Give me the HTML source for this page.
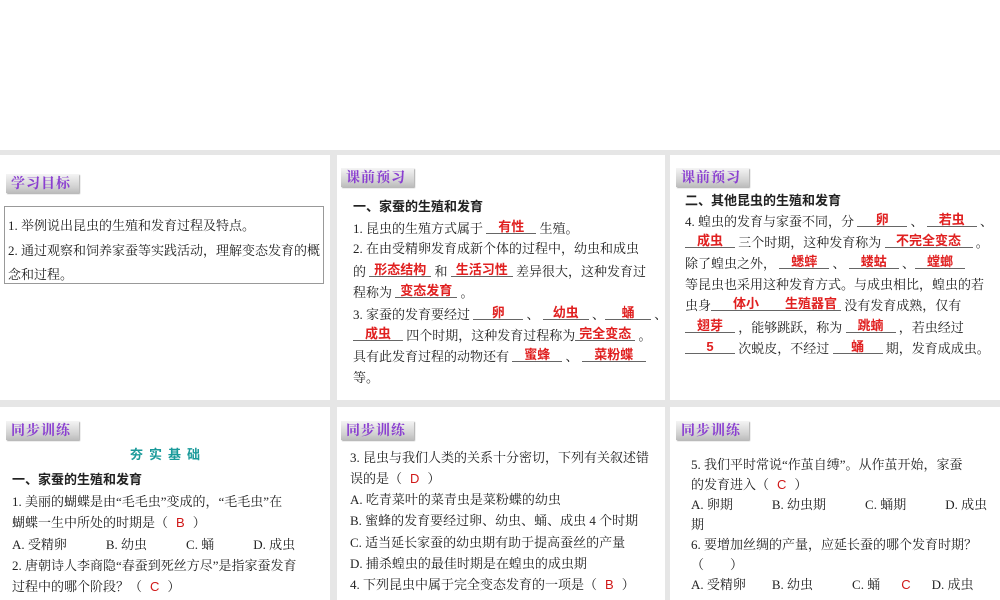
<!DOCTYPE html>
<html><head><meta charset="utf-8">
<style>
*{margin:0;padding:0;box-sizing:border-box}
body{width:1000px;height:600px;position:relative;background:#fff;overflow:hidden;font-family:"Liberation Serif","Noto Serif CJK SC",serif;font-size:13px;color:#222}
.bg{position:absolute;left:0;top:150px;width:1000px;height:450px;background:#e6e6e6}
.p{position:absolute;background:#fff}
.tag{position:absolute;height:19px;width:73px;background:linear-gradient(#f4f4f4,#d0d0d0 70%,#bcbcbc);color:#8a3fd0;font-family:"Noto Serif CJK SC",serif;font-weight:bold;font-size:14px;line-height:19px;padding-left:5px;letter-spacing:1px;box-shadow:1px 1px 1px #aaa}
.l{position:absolute;white-space:nowrap;line-height:16px}
.b{font-family:"Liberation Sans","Noto Sans CJK SC",sans-serif;font-weight:bold}
.u{display:inline-block;border-bottom:1px solid #666;text-align:center;color:#e02020;font-family:"Liberation Sans","Noto Sans CJK SC",sans-serif;font-weight:bold;line-height:13px;vertical-align:2px}
.r{color:#d01818;font-family:"Liberation Sans",sans-serif;padding:0 8px}
</style></head><body>
<div class="bg"></div>
<div class="p" style="left:0;top:155px;width:330px;height:245px"></div>
<div class="p" style="left:337px;top:155px;width:328px;height:245px"></div>
<div class="p" style="left:670px;top:155px;width:330px;height:245px"></div>
<div class="p" style="left:0;top:407px;width:330px;height:193px"></div>
<div class="p" style="left:337px;top:407px;width:328px;height:193px"></div>
<div class="p" style="left:670px;top:407px;width:330px;height:193px"></div>

<div class="tag" style="left:6px;top:174px">学习目标</div>
<div style="position:absolute;left:4px;top:206px;width:320px;height:78px;border:1px solid #999"></div>
<div class="l" style="left:8px;top:218px">1. 举例说出昆虫的生殖和发育过程及特点。</div>
<div class="l" style="left:8px;top:243px">2. 通过观察和饲养家蚕等实践活动，理解变态发育的概</div>
<div class="l" style="left:8px;top:267px">念和过程。</div>

<div class="tag" style="left:341px;top:168px">课前预习</div>
<div class="l b" style="left:353px;top:199px">一、家蚕的生殖和发育</div>
<div class="l" style="left:353px;top:220px">1. 昆虫的生殖方式属于 <span class="u" style="width:50px">有性</span> 生殖。</div>
<div class="l" style="left:353px;top:241px">2. 在由受精卵发育成新个体的过程中，幼虫和成虫</div>
<div class="l" style="left:353px;top:263px">的 <span class="u" style="width:62px">形态结构</span> 和 <span class="u" style="width:62px">生活习性</span> 差异很大，这种发育过</div>
<div class="l" style="left:353px;top:284px">程称为 <span class="u" style="width:62px">变态发育</span> 。</div>
<div class="l" style="left:353px;top:306px">3. 家蚕的发育要经过 <span class="u" style="width:50px">卵</span> 、 <span class="u" style="width:46px">幼虫</span> 、<span class="u" style="width:46px">蛹</span> 、</div>
<div class="l" style="left:353px;top:327px"><span class="u" style="width:50px">成虫</span> 四个时期，这种发育过程称为<span class="u" style="width:60px">完全变态</span> 。</div>
<div class="l" style="left:353px;top:348px">具有此发育过程的动物还有 <span class="u" style="width:50px">蜜蜂</span> 、 <span class="u" style="width:64px">菜粉蝶</span></div>
<div class="l" style="left:353px;top:370px">等。</div>

<div class="tag" style="left:676px;top:168px">课前预习</div>
<div class="l b" style="left:685px;top:193px">二、其他昆虫的生殖和发育</div>
<div class="l" style="left:685px;top:213px">4. 蝗虫的发育与家蚕不同，分 <span class="u" style="width:50px">卵</span> 、 <span class="u" style="width:50px">若虫</span> 、</div>
<div class="l" style="left:685px;top:234px"><span class="u" style="width:50px">成虫</span> 三个时期，这种发育称为 <span class="u" style="width:88px">不完全变态</span> 。</div>
<div class="l" style="left:685px;top:255px">除了蝗虫之外， <span class="u" style="width:50px">蟋蟀</span> 、 <span class="u" style="width:50px">蝼蛄</span> 、<span class="u" style="width:50px">螳螂</span></div>
<div class="l" style="left:685px;top:277px">等昆虫也采用这种发育方式。与成虫相比，蝗虫的若</div>
<div class="l" style="left:685px;top:297px">虫身<span class="u" style="width:70px">体小</span><span class="u" style="width:60px">生殖器官</span> 没有发育成熟，仅有</div>
<div class="l" style="left:685px;top:319px"><span class="u" style="width:50px">翅芽</span> ，能够跳跃，称为 <span class="u" style="width:50px">跳蝻</span> ，若虫经过</div>
<div class="l" style="left:685px;top:340px"><span class="u" style="width:50px">5</span> 次蜕皮，不经过 <span class="u" style="width:50px">蛹</span> 期，发育成成虫。</div>

<div class="tag" style="left:6px;top:421px">同步训练</div>
<div class="l b" style="left:130px;top:447px;color:#1a9a9a;letter-spacing:6px">夯实基础</div>
<div class="l b" style="left:12px;top:472px">一、家蚕的生殖和发育</div>
<div class="l" style="left:12px;top:494px">1. 美丽的蝴蝶是由“毛毛虫”变成的，“毛毛虫”在</div>
<div class="l" style="left:12px;top:515px">蝴蝶一生中所处的时期是（<span class="r">B</span>）</div>
<div class="l" style="left:12px;top:537px">A. 受精卵　　　B. 幼虫　　　C. 蛹　　　D. 成虫</div>
<div class="l" style="left:12px;top:558px">2. 唐朝诗人李商隐“春蚕到死丝方尽”是指家蚕发育</div>
<div class="l" style="left:12px;top:579px">过程中的哪个阶段？（<span class="r">C</span>）</div>

<div class="tag" style="left:341px;top:421px">同步训练</div>
<div class="l" style="left:350px;top:450px">3. 昆虫与我们人类的关系十分密切，下列有关叙述错</div>
<div class="l" style="left:350px;top:471px">误的是（<span class="r">D</span>）</div>
<div class="l" style="left:350px;top:492px">A. 吃青菜叶的菜青虫是菜粉蝶的幼虫</div>
<div class="l" style="left:350px;top:513px">B. 蜜蜂的发育要经过卵、幼虫、蛹、成虫 4 个时期</div>
<div class="l" style="left:350px;top:535px">C. 适当延长家蚕的幼虫期有助于提高蚕丝的产量</div>
<div class="l" style="left:350px;top:556px">D. 捕杀蝗虫的最佳时期是在蝗虫的成虫期</div>
<div class="l" style="left:350px;top:577px">4. 下列昆虫中属于完全变态发育的一项是（<span class="r">B</span>）</div>

<div class="tag" style="left:676px;top:421px">同步训练</div>
<div class="l" style="left:691px;top:457px">5. 我们平时常说“作茧自缚”。从作茧开始，家蚕</div>
<div class="l" style="left:691px;top:477px">的发育进入（<span class="r">C</span>）</div>
<div class="l" style="left:691px;top:497px">A. 卵期　　　B. 幼虫期　　　C. 蛹期　　　D. 成虫</div>
<div class="l" style="left:691px;top:517px">期</div>
<div class="l" style="left:691px;top:537px">6. 要增加丝绸的产量，应延长蚕的哪个发育时期？</div>
<div class="l" style="left:691px;top:557px">（　　）</div>
<div class="l" style="left:691px;top:577px">A. 受精卵　　B. 幼虫　　　C. 蛹　<span class="r">C</span>　D. 成虫</div>
</body></html>
